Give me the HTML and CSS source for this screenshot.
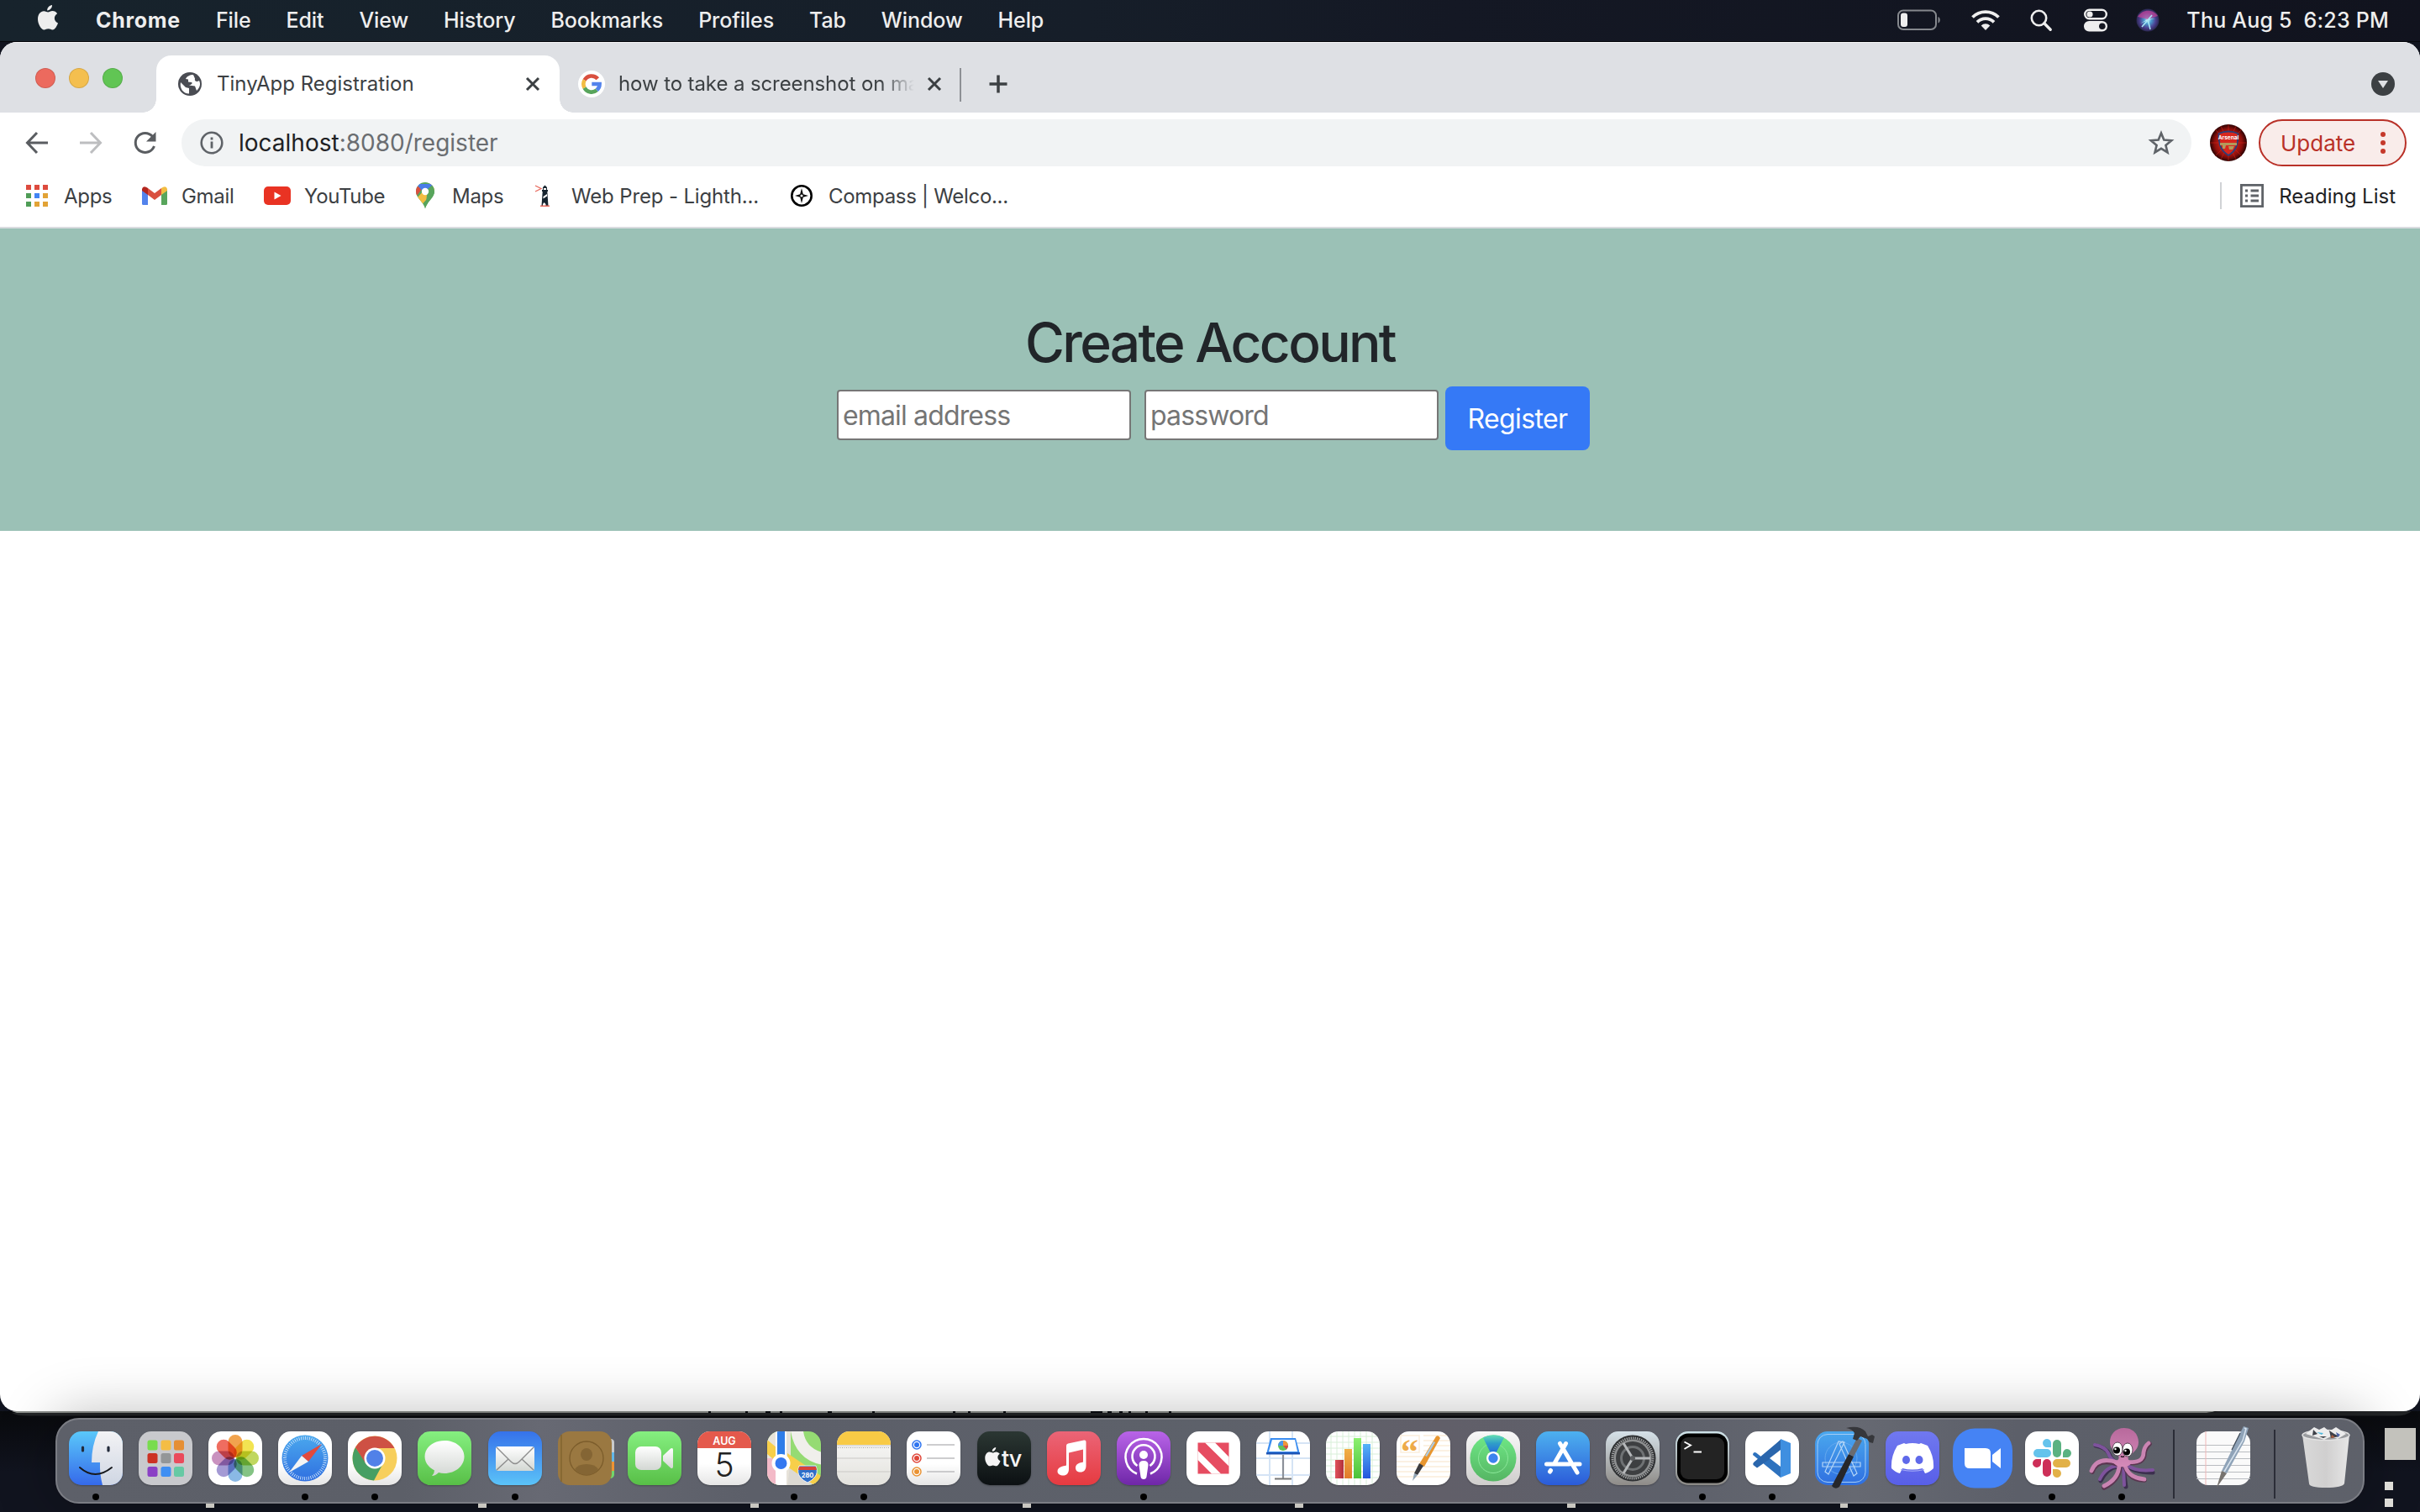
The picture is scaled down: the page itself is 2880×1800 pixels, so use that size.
FILE: index.html
```html
<!DOCTYPE html>
<html lang="en">
<head>
<meta charset="utf-8">
<title>TinyApp Registration</title>
<link rel="stylesheet" href="styles.css">
</head>
<body>
<svg class="defs" width="0" height="0" aria-hidden="true">
  <defs>
    <linearGradient id="gWhite" x1="0" y1="0" x2="0" y2="1"><stop offset="0" stop-color="#fff"/><stop offset="1" stop-color="#d3d7d3"/></linearGradient>
    <linearGradient id="gFace" x1="0" y1="0" x2="0" y2="1"><stop offset="0" stop-color="#5ac8fa"/><stop offset="1" stop-color="#3569ea"/></linearGradient>
    <linearGradient id="gFaceR" x1="0" y1="0" x2="0" y2="1"><stop offset="0" stop-color="#f3f3f5"/><stop offset="1" stop-color="#cfd6e3"/></linearGradient>
    <linearGradient id="gSafari" x1="0" y1="0" x2="0" y2="1"><stop offset="0" stop-color="#4aa8ee"/><stop offset="1" stop-color="#2f6fe0"/></linearGradient>
    <linearGradient id="gFind" x1="0" y1="0" x2="0" y2="1"><stop offset="0" stop-color="#6fe886"/><stop offset="1" stop-color="#55b563"/></linearGradient>
    <linearGradient id="gBeam" x1="0" y1="0" x2="0" y2="1"><stop offset="0" stop-color="#62dcb4"/><stop offset=".35" stop-color="#2f9fc8"/><stop offset="1" stop-color="#1f52e8"/></linearGradient>
    <linearGradient id="gBin" x1="0" y1="0" x2="1" y2="0"><stop offset="0" stop-color="#d9d9d9"/><stop offset=".5" stop-color="#d0cfcf"/><stop offset="1" stop-color="#e6e6e6"/></linearGradient>
    <linearGradient id="gOct" x1="0" y1="0" x2="0" y2="1"><stop offset="0" stop-color="#b8699c"/><stop offset="1" stop-color="#d58bb9"/></linearGradient>
    <radialGradient id="gSiri"><stop offset="0" stop-color="#d8f4ff"/><stop offset=".3" stop-color="#4b9fd0"/><stop offset=".7" stop-color="#4b3f8f"/><stop offset="1" stop-color="#2a2850"/></radialGradient>
    <radialGradient id="gFan"><stop offset=".3" stop-color="#d3251b"/><stop offset=".75" stop-color="#8d0f0b"/><stop offset="1" stop-color="#2a0202"/></radialGradient>
    <linearGradient id="gB1" x1="0" y1="0" x2="1" y2="0"><stop offset="0" stop-color="#e0525c"/><stop offset="1" stop-color="#b2303a"/></linearGradient>
    <linearGradient id="gB2" x1="0" y1="0" x2="0" y2="1"><stop offset="0" stop-color="#f0b045"/><stop offset="1" stop-color="#e27a2a"/></linearGradient>
    <linearGradient id="gB3" x1="0" y1="0" x2="0" y2="1"><stop offset="0" stop-color="#8df070"/><stop offset="1" stop-color="#4cc23b"/></linearGradient>
    <linearGradient id="gB4" x1="0" y1="0" x2="0" y2="1"><stop offset="0" stop-color="#55b4f8"/><stop offset="1" stop-color="#2456dc"/></linearGradient>
  </defs>
</svg>

<header class="menubar">
  <nav class="menus">
    <svg class="apple" viewBox="0 0 26 32"><path d="M18 0c.3 3.200-2.600 6.600-5.800 6.400C11.900 3.300 14.900.3 18 0zM13.200 8.600c1.200 0 3-1.500 5.300-1.500 2.200 0 4.400 1.200 5.600 3.100-4.800 2.900-4 9.200.9 11.200-1 3-3.600 8-6.500 8-1.900 0-2.600-1.200-5-1.200s-3.200 1.200-5 1.200C5 29.400 1 22.600 1 16.700 1 10.800 4.500 7.300 8.100 7.300c2.300 0 3.900 1.300 5.100 1.300z" fill="#eee"/></svg>
    <b>Chrome</b><span>File</span><span>Edit</span><span>View</span><span>History</span><span>Bookmarks</span><span>Profiles</span><span>Tab</span><span>Window</span><span>Help</span>
  </nav>
  <div class="status">
    <svg width="52" height="26" viewBox="0 0 52 26"><rect x="1" y="1.500" width="45" height="22.500" rx="6" fill="none" stroke="#85888d" stroke-width="2"/><rect x="4" y="4.500" width="8" height="16.500" rx="3" fill="#eee"/><path d="M48.500 9c3 1 3 6.500 0 7.500z" fill="#85888d"/></svg>
    <svg width="34" height="26" viewBox="0 0 34 26"><g fill="none" stroke="#eee" stroke-width="3.800"><path d="M1.500 9.500a22 22 0 0 1 31 0"/><path d="M7 15.300a14.200 14.200 0 0 1 20 0"/></g><path d="M17 25l-5.300-5.600a7.600 7.600 0 0 1 10.600 0z" fill="#eee"/></svg>
    <svg width="26" height="26" viewBox="0 0 26 26"><circle cx="10.500" cy="10.500" r="8.700" fill="none" stroke="#eee" stroke-width="2.600"/><path d="M16.800 16.800l7.400 7.400" stroke="#eee" stroke-width="3.400" stroke-linecap="round"/></svg>
    <svg class="control" width="28" height="28" viewBox="0 0 28 28"><rect x="1.200" y="1.700" width="25.600" height="10.600" rx="5.300" fill="none" stroke="#eee" stroke-width="2.400"/><circle cx="7" cy="7" r="3.600" fill="#eee"/><rect y="15" width="28" height="12.500" rx="6.200" fill="#eee"/><circle cx="21.800" cy="21.200" r="3.800" fill="#151722"/></svg>
    <svg width="28" height="28" viewBox="0 0 28 28"><circle cx="14" cy="14" r="13.500" fill="url(#gSiri)"/><path d="M2 10C7 1 20 0 26 9l-12 4z" fill="#d0449a" opacity=".65"/><path d="M5 18l9-5 9-1-9 2z" fill="#dff8ff"/><path d="M14 13l3 12M14 14l-7 8M14 14l5-6" stroke="#a9e8f5" stroke-width="1.500"/></svg>
    <span class="clock">Thu Aug 5&nbsp; 6:23 PM</span>
  </div>
</header>

<main class="window">
  <div class="tabs">
    <div class="lights"><i class="r"></i><i class="y"></i><i class="g"></i></div>
    <div class="tab active">
      <svg width="28" height="28" viewBox="0 0 28 28"><circle cx="14" cy="14" r="14" fill="#4a4c53"/><path d="M3 12l6 6 4 1v6.500C6 25.500 1.500 19 3 12zM18 3c-4 0-8 2-9 5l3 .500v3l4 .500c2 1-1 3-3 3.500l7 1 2 5.500c4-4 5-8 3-12-3 2-6 .500-5-2.500z" fill="#fff"/></svg>
      <span class="title">TinyApp Registration</span>
      <svg class="x" viewBox="0 0 16 16"><path d="M1 1l14 14M15 1L1 15"/></svg>
    </div>
    <div class="tab second">
      <svg width="32" height="32" viewBox="0 0 32 32"><circle cx="16" cy="16" r="16" fill="#fff"/><g fill="none" stroke-width="4.600"><path d="M23.300 9.800A9.600 9.600 0 0 0 7.600 11.400" stroke="#d9503f"/><path d="M7.600 11.400a9.600 9.600 0 0 0 0 9.200" stroke="#f2bd42"/><path d="M7.600 20.600a9.600 9.600 0 0 0 14.700 2.700" stroke="#58a55c"/><path d="M22.300 23.300c2.300-2 3.300-4.300 3.300-7.300H16.300" stroke="#5383ec"/></g></svg>
      <span class="title fade">how to take a screenshot on ma</span>
      <svg class="x" viewBox="0 0 16 16"><path d="M1 1l14 14M15 1L1 15"/></svg>
    </div>
    <i class="tabsep"></i>
    <svg class="plus" viewBox="0 0 24 24"><path d="M12 1.500v21M1.500 12h21"/></svg>
    <svg class="search-tabs" viewBox="0 0 28 28"><circle cx="14" cy="14" r="14" fill="#3c4043"/><path d="M8 10h12l-6 9z" fill="#dee0e4"/></svg>
  </div>

  <div class="toolbar">
    <svg class="nav" viewBox="0 0 28 28"><path d="M27 14H3M14 2L2.500 14 14 26"/></svg>
    <svg class="nav off" viewBox="0 0 28 28"><path d="M1 14h24M14 2l11.500 12L14 26"/></svg>
    <svg class="nav" viewBox="0 0 28 28"><path d="M23.500 6.500A11.500 11.500 0 1 0 25.500 18" /><path d="M27.500 1v11.500H16z" fill="#5a5d61" stroke="none"/></svg>
    <div class="omnibox">
      <svg width="28" height="28" viewBox="0 0 28 28"><circle cx="14" cy="14" r="12.300" fill="none" stroke="#5f6368" stroke-width="2.600"/><path d="M14 12.500v8M14 7.500v3" stroke="#5f6368" stroke-width="2.800"/></svg>
      <span class="url"><em>localhost</em>:8080/register</span>
      <svg class="star" width="32" height="30" viewBox="0 0 32 30"><path d="M16 3.500l3.300 8 8.900.700-6.800 5.700 2.100 8.500-7.500-4.600-7.500 4.600 2.100-8.500-6.800-5.700 8.900-.700z" fill="none" stroke="#5f6368" stroke-width="2.600"/></svg>
    </div>
    <svg class="avatar" viewBox="0 0 44 44"><circle cx="22" cy="22" r="22" fill="url(#gFan)"/><path d="M22 0v44M0 22h44M6 6l32 32M38 6L6 38M13 2l18 40M31 2L13 42" stroke="#e0261b" stroke-width="1" opacity=".5"/><path d="M10.500 11q11.500-5 23 0c0 13-2 20-11.500 26-9.500-6-11.500-13-11.500-26z" fill="#d8281e" stroke="#2c3f78" stroke-width="1.800"/><text x="22" y="18" text-anchor="middle" class="crest">Arsenal</text><path d="M12 22h20v3H19l-1 4h-3v-4h-3zM22 26h7l-2 4h-4z" fill="#b39a5a"/></svg>
    <div class="update"><span>Update</span><svg width="8" height="28" viewBox="0 0 8 28"><g fill="#c5392b"><circle cx="4" cy="4" r="3"/><circle cx="4" cy="14" r="3"/><circle cx="4" cy="24" r="3"/></g></svg></div>
  </div>

  <div class="bookmarks">
    <a class="bm apps"><svg width="26" height="26" viewBox="0 0 26 26"><path d="M0 0h6v6H0zM10 0h6v6h-6zM20 0h6v6h-6z" fill="#dd4b3e"/><path d="M0 10h6v6H0zM0 20h6v6H0z" fill="#4f9d57"/><path d="M10 10h6v6h-6z" fill="#4285f4"/><path d="M20 10h6v6h-6zM10 20h6v6h-6zM20 20h6v6h-6z" fill="#e2a336"/></svg>Apps</a>
    <a class="bm gmail"><svg width="30" height="22" viewBox="0 0 30 22"><path d="M0 3v17.500Q0 22 1.500 22H7V9z" fill="#5383ec"/><path d="M30 3v17.500q0 1.500-1.500 1.500H23V9z" fill="#58a55c"/><path d="M0 3Q1-1 5 .8L7 2v8L0 5z" fill="#b3261e"/><path d="M30 3q-1-4-5-2.200L23 2v8l7-5z" fill="#f2bd42"/><path d="M7 2l8 6 8-6v8l-8 6-8-6z" fill="#d9503f"/></svg>Gmail</a>
    <a class="bm yt"><svg width="32" height="22" viewBox="0 0 32 22"><rect width="32" height="22" rx="5" fill="#e93323"/><path d="M12.500 6.500v9l8-4.500z" fill="#fff"/></svg>YouTube</a>
    <a class="bm maps"><svg width="22" height="32" viewBox="0 0 22 32"><clipPath id="pin"><path d="M11 0a11 11 0 0 1 11 11c0 8-8.500 11-11 20.500C8.500 22 0 19 0 11A11 11 0 0 1 11 0z"/></clipPath><g clip-path="url(#pin)"><path d="M0 0h22v32H0z" fill="#58a55c"/><path d="M0 20L22-4v14L4 30z" fill="#f2bd42"/><path d="M-2 2l9 6-9 12z" fill="#d9503f"/><path d="M2 2h20L11 14 2 4z" fill="#4a7de8"/><path d="M14 8L22 1v12L11 31z" fill="#58a55c"/></g><circle cx="11" cy="11" r="4.200" fill="#fff"/></svg>Maps</a>
    <a class="bm light"><svg width="17" height="26" viewBox="0 0 17 26"><path d="M0 1l7 3.500L0 8" fill="none" stroke="#e8695c" stroke-width="1.300"/><path d="M9 3l2.500-2.500L14 3v3h1v2h-.7l1.200 17H7.500L8.700 8H8V6h1z" fill="#16242f"/><path d="M10 4h3v2h-3zM9.500 14l4.500-3v2.500l-4.500 3zM9 23l1.500-2 2 2v2H9z" fill="#fff"/><path d="M6 25.300h11" stroke="#e8695c" stroke-width="1.400"/></svg>Web Prep - Lighth...</a>
    <a class="bm comp"><svg width="26" height="26" viewBox="0 0 26 26"><circle cx="13" cy="13" r="11.700" fill="#fff" stroke="#000" stroke-width="2.600"/><path d="M13 4l1.800 7.200L21 13l-6.200 1.800L13 22l-1.800-7.200L5 13l6.200-1.800z"/><circle cx="13" cy="13" r="1.600" fill="#fff"/></svg>Compass | Welco...</a>
    <a class="bm reading"><i></i><svg width="28" height="28" viewBox="0 0 28 28"><rect x="1.400" y="1.400" width="25.200" height="25.200" fill="none" stroke="#5f6368" stroke-width="2.800"/><path d="M6 8h3M6 14h3M6 20h3M12.500 8H22M12.500 14H22M12.500 20H22" stroke="#5f6368" stroke-width="3"/></svg>Reading List</a>
  </div>

  <section class="page">
    <h1>Create Account</h1>
    <form class="register">
      <input type="email" placeholder="email address">
      <input type="password" placeholder="password">
      <button type="button">Register</button>
    </form>
  </section>
</main>

<footer class="desktop">
  <svg class="edge" width="2880" height="8" viewBox="0 0 2880 8"><path d="M14 0h2622q-4 2-10 2H20z" fill="#8d908d"/><path d="M14 2h2612l14-2h230q-6 5.500-20 5.500H34Q20 5.500 14 2z" fill="#222426"/><path d="M843 0h3v2h-3zM887 0h3v2h-3zM911 0h6v2h-6zM928 0h3v2h-3zM985 0h5v2h-5zM1038 0h3v2h-3zM1134 0h3v2h-3zM1152 0h3v2h-3zM1194 0h3v2h-3zM1298 0h14v2h-14zM1318 0h5v2h-5zM1332 0h4v2h-4zM1343 0h3v2h-3zM1363 0h3v2h-3zM1391 0h3v2h-3z" fill="#0a0c10"/></svg>
  <ul class="dock">
    <li class="on"><svg class="tile" viewBox="0 0 64 64"><path fill="url(#gFace)" d="M0 0h64v64H0z"/><path d="M35 0Q27 17 27 37h10q-.500 14 3 27h24V0z" fill="url(#gFaceR)"/><path d="M16.500 19v4M47 19v4" stroke="#222b3a" stroke-width="3.200" stroke-linecap="round"/><path d="M13 43q18 16 38 0" fill="none" stroke="#17191d" stroke-width="2" stroke-linecap="round"/></svg></li>
    <li><svg class="tile launchpad" viewBox="0 0 64 64"><g><rect x="10.500" y="10.500" width="12" height="12" rx="2.500" fill="#78dc4f"/><rect x="26.500" y="10.500" width="12" height="12" rx="2.500" fill="#f4bd45"/><rect x="42" y="10.500" width="12" height="12" rx="2.500" fill="#e58f35"/><rect x="10.500" y="26" width="12" height="12" rx="2.500" fill="#cc3124"/><rect x="26.500" y="26" width="12" height="12" rx="2.500" fill="#939698"/><rect x="42" y="26" width="12" height="12" rx="2.500" fill="#ea4a5c"/><rect x="10.500" y="42" width="12" height="12" rx="2.500" fill="#8a40c5"/><rect x="26.500" y="42" width="12" height="12" rx="2.500" fill="#3f8ff3"/><rect x="42" y="42" width="12" height="12" rx="2.500" fill="#66c9a4"/></g></svg></li>
    <li><svg class="tile white photos" viewBox="0 0 64 64"><g transform="translate(32 32)"><rect x="-8.500" y="-28" width="17" height="27" rx="8.500" fill="#f0993a"/><rect x="-8.500" y="-28" width="17" height="27" rx="8.500" fill="#f1e13f" transform="rotate(45)"/><rect x="-8.500" y="-28" width="17" height="27" rx="8.500" fill="#b9d34f" transform="rotate(90)"/><rect x="-8.500" y="-28" width="17" height="27" rx="8.500" fill="#76bd76" transform="rotate(135)"/><rect x="-8.500" y="-28" width="17" height="27" rx="8.500" fill="#7db1e3" transform="rotate(180)"/><rect x="-8.500" y="-28" width="17" height="27" rx="8.500" fill="#9a8fd0" transform="rotate(225)"/><rect x="-8.500" y="-28" width="17" height="27" rx="8.500" fill="#c386b8" transform="rotate(270)"/><rect x="-8.500" y="-28" width="17" height="27" rx="8.500" fill="#ee5d4e" transform="rotate(315)"/></g></svg></li>
    <li class="on"><svg class="tile white" viewBox="0 0 64 64"><circle cx="32" cy="32" r="27.500" fill="url(#gSafari)"/><circle cx="32" cy="32" r="24" fill="none" stroke="#d6e9fb" stroke-width="4" stroke-dasharray=".8 1.700"/><path d="M52 15L36 36l-8-7z" fill="#e2493c"/><path d="M13 49l15-20 8 7z" fill="#f4f4f4"/></svg></li>
    <li class="on"><svg class="tile white" viewBox="0 0 64 64"><circle cx="32" cy="32" r="26.500" fill="#f7cf5c"/><path d="M32 32L9 19A26.500 26.500 0 0 1 55.500 20H32z" fill="#ce5144"/><path d="M9 19a26.500 26.500 0 0 0 22 39.500L42 38 22 38z" fill="#479f63"/><path d="M9 19l12 19 11-18z" fill="#ce5144"/><circle cx="32" cy="32" r="12.500" fill="#fff"/><circle cx="32" cy="32" r="10" fill="#5181e8"/></svg></li>
    <li><svg class="tile green" viewBox="0 0 64 64"><path d="M32 11c13 0 23.500 8 23.500 19S45 50 32 50q-4 0-7-1-4 4-8 4 3-3 3-6.500C13 43 8.500 37 8.500 30 8.500 19 19 11 32 11z" fill="url(#gWhite)"/></svg></li>
    <li class="on"><svg class="tile mail" viewBox="0 0 64 64"><rect x="9" y="18" width="46" height="29" rx="3" fill="url(#gWhite)"/><path d="M10 19l17 17q5 5 10 0l17-17M10 46l14-13M54 46L40 33" fill="none" stroke="#8d8d8d" stroke-width="1.400"/></svg></li>
    <li><svg class="bare" viewBox="0 0 64 64"><path d="M60 9h4q3 1 3 4v12h-7z" fill="#c9cacc"/><path d="M60 25h7v11h-7z" fill="#62b7e8"/><path d="M60 36h7v11h-7z" fill="#ee9335"/><path d="M60 47h7v5q-1 4-5 4z" fill="#72d66b"/><rect x="0" y="0" width="64" height="64" rx="14" fill="#9a7841"/><path d="M4 4v56" stroke="#82642f" stroke-width="1.500"/><circle cx="34" cy="32" r="20" fill="none" stroke="#7b5c2b" stroke-width="1.300"/><ellipse cx="34" cy="27.500" rx="7" ry="7.500" fill="#846534"/><path d="M20 45q4-6 14-6t14 6q-5 7-14 7t-14-7z" fill="#846534"/></svg></li>
    <li><svg class="tile green" viewBox="0 0 64 64"><rect x="9" y="18" width="31" height="28" rx="7" fill="url(#gWhite)"/><path d="M42 29l9-8.500q3-1.500 3 1.500v20q0 3-3 1.500L42 35z" fill="url(#gWhite)"/></svg></li>
    <li><svg class="tile white" viewBox="0 0 64 64"><path d="M0 0h64v20H0z" fill="#e4594c"/><text x="32" y="15.500" text-anchor="middle" class="aug">AUG</text><text x="32" y="53.500" text-anchor="middle" class="day">5</text></svg></li>
    <li class="on"><svg class="tile" viewBox="0 0 64 64"><path d="M0 0h64v64H0z" fill="#95db73"/><path d="M0 0h28v64H0z" fill="#e7e3da"/><path d="M28 32l36 34H24z" fill="#dcd9d3"/><path d="M28 0Q34 34 66 40V25Q46 20 43 0z" fill="#f0efeb"/><path d="M0 32h10v32H0z" fill="#f3bac8"/><path d="M0 10l12 10v17L0 27zM24 26l40 27v11h-8L24 42z" fill="#f7cf4a"/><path d="M10 0h13v64H10z" fill="#fff"/><path d="M12 0h9v34h-9z" fill="#2f7de8"/><circle cx="16.500" cy="38" r="11" fill="#fff"/><circle cx="16.500" cy="38" r="7" fill="#3478f0"/><path d="M38 41h20q3 8-1 13-4 5-9 7-5-2-9-7-4-5-1-13z" fill="#2f6fc9" stroke="#fff" stroke-width=".8"/><path d="M38 42h20l1 4H37z" fill="#d8433a"/><text x="48" y="54.500" text-anchor="middle" class="route">280</text></svg></li>
    <li class="on"><svg class="tile notes" viewBox="0 0 64 64"><path d="M0 0h64v16H0z" fill="#f8ca45"/><path d="M0 17h64M0 32h64M0 48h64" stroke="#c9c8c5" stroke-width="1"/><path d="M1 19.500h62" stroke="#a5a39e" stroke-dasharray="1 1.500"/></svg></li>
    <li><svg class="tile white" viewBox="0 0 64 64"><g fill="#fff" stroke-width="1.500"><circle cx="12" cy="16" r="5" stroke="#2f75f0"/><circle cx="12" cy="32" r="5" stroke="#e0473a"/><circle cx="12" cy="48" r="5" stroke="#ea9333"/></g><circle cx="12" cy="16" r="3" fill="#2f75f0"/><circle cx="12" cy="32" r="3" fill="#e0473a"/><circle cx="12" cy="48" r="3" fill="#ea9333"/><path d="M24 16h33M24 32h33M24 48h33" stroke="#bdbdc0" stroke-width="1.300"/></svg></li>
    <li><svg class="tile tv" viewBox="0 0 64 64"><path transform="translate(8.500 19) scale(.76)" d="M18 0c.3 3.200-2.600 6.600-5.800 6.400C11.900 3.300 14.900.3 18 0zM13.200 8.600c1.200 0 3-1.500 5.300-1.500 2.200 0 4.400 1.200 5.600 3.100-4.800 2.900-4 9.200.9 11.200-1 3-3.600 8-6.500 8-1.900 0-2.600-1.200-5-1.200s-3.200 1.200-5 1.200C5 29.400 1 22.600 1 16.700 1 10.800 4.500 7.300 8.100 7.300c2.300 0 3.900 1.300 5.100 1.300z" fill="#f5f5f5"/><text x="29" y="42" class="tvt">tv</text></svg></li>
    <li><svg class="tile music" viewBox="0 0 64 64"><path d="M23 17q0-2 2-2.500l19-4q2.500-.500 2.500 2V41c0 5-3 7.500-6.500 7.500-4 0-6-2-6-5 0-5 5-6 9-7V21.500L26 25.500V45c0 5-3 7.500-6.500 7.500-4 0-7-1.500-7-5 0-5 6.500-6 10.500-7z" fill="#fff"/></svg></li>
    <li class="on"><svg class="tile podcast" viewBox="0 0 64 64"><g fill="none" stroke="#fff" stroke-width="2.600"><path d="M24 50.500a21.500 21.500 0 1 1 16 0"/><path d="M24.500 41a13.500 13.500 0 1 1 15 0"/></g><circle cx="32" cy="28" r="5" fill="#fff"/><path d="M26.500 40q0-5 5.500-5t5.500 5l-2 14q-.500 3-3.500 3t-3.500-3z" fill="#fff"/></svg></li>
    <li><svg class="tile flat" viewBox="0 0 64 64"><path d="M13.500 13.500h37v37h-37z" fill="#e64c61"/><path d="M22 13.500h12l16.500 17v11zM13.500 23v11L30 50.500h11z" fill="#fff"/></svg></li>
    <li><svg class="tile flat" viewBox="0 0 64 64"><path d="M16 0v64M43 0v64M0 14h64M0 32h64M0 52h64" stroke="#d5e4f5" stroke-width="2"/><path d="M17 8h30l5 19H12z" fill="#3b8df0"/><path d="M19 10h27l3 14H15z" fill="#fff"/><path d="M12 25h40v2.500H12z" fill="#1c54b5"/><circle cx="32" cy="17" r="6" fill="#62c25b"/><path d="M32 17v-6a6 6 0 0 1 6 6z" fill="#f0953a"/><path d="M32 17v-6a6 6 0 0 0-6 6z" fill="#4a94f0"/><path d="M32 17h6a6 6 0 0 1-2 4.500z" fill="#d94a48"/><path d="M32 28v29" stroke="#8c9199" stroke-width="2.200"/><path d="M22 56.500h20" stroke="#777" stroke-width="1.800"/></svg></li>
    <li><svg class="tile flat" viewBox="0 0 64 64"><path d="M6 0v64M13 0v64M20 0v64M27 0v64M34 0v64M41 0v64M48 0v64M55 0v64M0 6h64M0 13h64M0 20h64M0 27h64M0 34h64M0 41h64M0 48h64M0 55h64" stroke="#d8efd8"/><path d="M11 34h10v22H11z" fill="url(#gB1)"/><path d="M22 21h9v35h-9z" fill="url(#gB2)"/><path d="M33 8h9v48h-9z" fill="url(#gB3)"/><path d="M44 15h9v41h-9z" fill="url(#gB4)"/></svg></li>
    <li><svg class="tile flat" viewBox="0 0 64 64"><path d="M32 5h32M32 11h32M32 17h32M32 23h32M0 30h64M0 36h64M0 42h64M0 48h64M0 54h64" stroke="#f8e3c7" stroke-width="1.200"/><path d="M5 5h22v20H5z" fill="none" stroke="#fbeedb" stroke-width="1.500"/><text x="5" y="38" class="quote">“</text><path d="M47 6q3-2 5 2L33 42l-6-3z" fill="#e8962f"/><path d="M44 12l2 1-10 17-2-1z" fill="#a9cbe6"/><path d="M27 38l5 3-7 11-4-2z" fill="#3b3c40"/><path d="M21 50l4 2-6 7z" fill="#8fa3b3"/></svg></li>
    <li><svg class="tile findmy" viewBox="0 0 64 64"><circle cx="32" cy="32" r="27.500" fill="url(#gFind)"/><circle cx="32" cy="32" r="17.500" fill="none" stroke="#8be79a" stroke-width="1"/><path d="M32 32L20 7.500a27.500 27.500 0 0 1 25 0z" fill="url(#gBeam)"/><circle cx="32" cy="32" r="8" fill="#fff"/><circle cx="32" cy="32" r="5.700" fill="#3d83ee"/></svg></li>
    <li><svg class="tile store" viewBox="0 0 64 64"><g stroke="#fff" stroke-width="5" stroke-linecap="round"><path d="M28.500 14.500L49 49M35.500 14.500L22 38M12.500 39h27M46 39h6M16.500 48l1-1.500"/></g></svg></li>
    <li><svg class="tile prefs" viewBox="0 0 64 64"><circle cx="32" cy="32" r="27.500" fill="#2f3133"/><circle cx="32" cy="32" r="22.500" fill="#8e9091"/><circle cx="32" cy="32" r="24" fill="none" stroke="#a3a5a6" stroke-width="3" stroke-dasharray="1.300 1.200"/><circle cx="32" cy="32" r="20" fill="#3d3f41"/><circle cx="32" cy="32" r="13.500" fill="none" stroke="#6f7274" stroke-width="3"/><path d="M32 32h21M32 32L21 14M32 32L21 50" stroke="#b5b8ba" stroke-width="3"/><circle cx="32" cy="32" r="3" fill="#5c5e60"/></svg></li>
    <li class="on"><svg class="tile term" viewBox="0 0 64 64"><rect x="2" y="2.500" width="60" height="59" rx="13" fill="#000"/><rect x="6" y="7" width="52" height="50" rx="9" fill="#232323"/><path d="M10.500 12.500l7.500 4-7.500 4.500M21.500 24.500h9.500" stroke="#fff" stroke-width="1.900" fill="none"/></svg></li>
    <li class="on"><svg class="tile flat" viewBox="0 0 64 64"><path d="M42 10L20 31 13 25.500q-2-1-3.500.500L9 28l33 27z" fill="#2e72be"/><path d="M42 10v14L14 43.500 9.500 40q-1-2 1-3.500z" fill="#2a66ad"/><path d="M42 9l12 5v36l-12 5z" fill="#3f8fe0"/><path d="M42 22v20L29 32z" fill="#fff"/></svg></li>
    <li><svg class="bare" viewBox="0 0 64 64"><rect width="64" height="64" rx="15" fill="url(#gSafari)"/><rect x="3" y="3.500" width="57" height="57" rx="12" fill="none" stroke="#a4cdf5" stroke-width="1"/><circle cx="31" cy="32" r="19" fill="none" stroke="#66a9ee"/><g fill="none" stroke="#b3d5f7" stroke-width="1.200"><path d="M33 12l17 38-4 3-17-38zM28 12L12 48l4 3 19-38zM9 37h45v5H9z"/></g><path d="M40 27l6 3-17 36q-5 4-9-1z" fill="#26272b"/><path d="M50 8l6 3-10 19-6-3z" fill="#696b70"/><path d="M37-4q15-4 23 4l3 6 5-2 3 2-2 8-4-1-3-4-8-3-4 5-5-2 2-7q-3-5-10-6z" fill="#36373b"/></svg></li>
    <li class="on"><svg class="tile discord" viewBox="0 0 64 64"><path d="M24 15q8-2 16 0l2-1 8 3q8 13 7 27-5 5-10 6l-3-6q-12 3-24 0l-3 6q-5-1-10-6Q6 30 14 17l8-3z" fill="#fff"/><ellipse cx="24.500" cy="34" rx="4.500" ry="5" fill="#5f69ea"/><ellipse cx="40" cy="34" rx="4.500" ry="5" fill="#5f69ea"/><path d="M18 45.500q14 3.500 28 0" stroke="#a7aef6" fill="none"/></svg></li>
    <li><svg class="bare" viewBox="0 0 64 64"><rect x="-3" y="-3.500" width="71" height="71" rx="26" fill="#4583f4"/><path d="M11 20h25q6 0 6 6v18H17q-6 0-6-6z" fill="#fff"/><path d="M44 28l10-8v24l-10-8z" fill="#fff"/></svg></li>
    <li class="on"><svg class="tile flat" viewBox="0 0 64 64"><g stroke-width="10" stroke-linecap="round" fill="none"><path d="M15 26h11" stroke="#65c3ec"/><path d="M38 15v11" stroke="#5bb281"/><path d="M38 38h11" stroke="#e2b148"/><path d="M26 38v11" stroke="#cd2f58"/></g><path d="M31 19v-4.500a5 5 0 1 0-5 4.500z" fill="#65c3ec"/><path d="M45 31h4.500a5 5 0 1 0-4.500-5z" fill="#5bb281"/><path d="M33 45v4.500a5 5 0 1 0 5-4.500z" fill="#e2b148"/><path d="M19 33h-4.500a5 5 0 1 0 4.500 5z" fill="#cd2f58"/></svg></li>
    <li class="on"><svg class="bare" viewBox="0 0 64 64"><g fill="none" stroke-linecap="round" stroke-linejoin="round"><g stroke="#3c2f4e" stroke-width="5"><path d="M29 38Q20 36 17 27 13 19 1 17M27 42Q15 43 7 59M39 41q8 8 30 8M34 44l3 22"/></g><g stroke="#7e539c" stroke-width="4"><path d="M28 37Q19 35 16 26 12 18 0 16M27 41Q13 42 6 57M39 40q8 8 30 6M34 43l1 21"/></g><g stroke="#5a3550" stroke-width="5.600"><path d="M27 39Q3 31-3 48M38 37q21 3 21-11 1-7 6-11M30 42q-1 16-19 25M36 42q5 16 23 16"/></g><g stroke="#ca84b2" stroke-width="4.800"><path d="M27 37Q3 29-4 47M38 36q20 3 20-11 1-7 6-11M29 41q-1 16-18 24M36 41q5 15 23 16"/></g></g><path d="M35-4c11 0 17 8 17 17 0 8-6 12-11 16-3 3-1 6 3 8-3 7-18 7-22 0 5-2 8-4 6-8-4-4-10-8-10-16C18 4 24-4 35-4z" fill="url(#gOct)"/><ellipse cx="27" cy="21" rx="6" ry="8" fill="#fff" stroke="#3a2535" stroke-width=".8"/><ellipse cx="39" cy="22" rx="6" ry="8" fill="#fff" stroke="#3a2535" stroke-width=".8"/><circle cx="26" cy="22.500" r="4"/><circle cx="38" cy="24.500" r="4"/><circle cx="24.500" cy="21" r="1.200" fill="#fff"/><circle cx="36.500" cy="23" r="1.200" fill="#fff"/><path d="M31 29.500q2 2 4 0" stroke="#25111f" stroke-width="1.200" fill="none"/></svg></li>
    <li class="sep"></li>
    <li class="solo"><svg class="bare" viewBox="0 0 64 64"><rect width="64" height="64" rx="14" fill="#fafafa"/><path d="M0 16.500h64M0 24.500h64M0 32.500h64M0 40.500h64M0 48.500h64M0 56.500h64" stroke="#b9bcc0" stroke-width="1.200"/><path d="M11 0v64" stroke="#f0b7b7"/><path d="M56-6l6 2-5 16-21 38-6-3L49 8z" fill="#8fa3b8"/><path d="M57-4l2 1-4 14-22 37" fill="none" stroke="#d8e3ee" stroke-width="1.500"/><path d="M52 2l-10 20" stroke="#3f4a58" stroke-width="1.300"/><path d="M30 47l6 3-12 17z" fill="#77736f"/></svg></li>
    <li class="sep two"></li>
    <li class="solo"><svg class="bare" viewBox="0 0 64 64"><path d="M4 4h56l-6 58q-2 5-22 5t-20-5z" fill="url(#gBin)"/><ellipse cx="32" cy="4.500" rx="28" ry="6" fill="#9a9c9f" stroke="#e3e3e3" stroke-width="1.500"/><path d="M8 3l10-8 6 3 6-3 6 5 8-5 12 8-10 6-8-3-8 4-9-3z" fill="#ececec"/><path d="M17-2l5 5-6 2zM36-1l6 4 6 3-10 2zM24 6l5 2 4-2z" fill="#3d4048"/><path d="M21 1l8 1-2 2z" fill="#4fb8dc"/><path d="M44 1l5 3-3 3z" fill="#4a63a8"/><path d="M39 4l4 3-5 1z" fill="#a85a3c"/></svg></li>
  </ul>
  <svg class="stacks" width="38" height="96" viewBox="0 0 38 96"><path d="M0 0h37v38H0z" fill="#c3c2bc"/><path d="M0 64h10v10H0zM0 84h10v10H0z" fill="#deddd8"/></svg>
  <svg class="bits" width="2200" height="5" viewBox="0 0 2200 5"><path d="M245 0h10v5h-10zM569 0h10v5h-10zM893 0h10v5h-10zM1217 0h10v5h-10zM1541 0h10v5h-10zM1865 0h10v5h-10zM2190 0h9v5h-9z" fill="#c9c7c1"/></svg>
</footer>
</body>
</html>
```
FILE: styles.css
```css
* { box-sizing: border-box; }
body {
  margin: 0;
  width: 2880px;
  height: 1800px;
  overflow: hidden;
  display: flex;
  flex-direction: column;
  background: #11141f;
  font-family: Inter, "Liberation Sans", sans-serif;
  color: #3c4043;
}
svg { display: block; flex: none; overflow: visible; }
.defs { position: absolute; }

/* system menu bar */
.menubar {
  height: 50px;
  flex: none;
  display: flex;
  justify-content: space-between;
  padding: 0 37px 2px 44px;
  background: linear-gradient(90deg, #17232c, #161e29 45%, #141824 60%, #11131e);
  border-bottom: 1px solid #05070b;
  color: #eee;
  font-size: 25px;
}
.menus, .status { display: flex; align-items: center; }
.menus { gap: 42px; letter-spacing: -0.1px; }
.menus b { letter-spacing: 0.7px; }
.menus .apple { width: 26px; height: 32px; margin-right: 2px; margin-top: -4px; }
.menus span { font-weight: 500; }
.status { gap: 36px; }
.control { margin: 0 -2px 0 2px; }
.clock { margin-left: -4px; font-weight: 500; letter-spacing: 0.22px; white-space: nowrap; }

/* browser window */
.window {
  height: 1630px;
  flex: none;
  background: #fff;
  border-radius: 20px;
  overflow: hidden;
}
.tabs {
  height: 84px;
  display: flex;
  align-items: flex-end;
  background: #dee0e4;
  border-top: 1px solid #f6f6f7;
}
.lights { width: 186px; height: 83px; display: flex; gap: 16px; padding: 30px 0 0 42px; }
.lights i { width: 24px; height: 24px; border-radius: 50%; border: 1px solid rgba(0,0,0,.12); }
.r { background: #ec6a5e; }
.y { background: #f4bf4f; }
.g { background: #61c554; }
.tab { height: 68px; display: flex; align-items: center; }
.tab.active {
  position: relative;
  width: 480px;
  padding: 0 24px 0 26px;
  gap: 18px;
  background: #fff;
  border-radius: 18px 18px 0 0;
}
.tab.active::before, .tab.active::after {
  content: "";
  position: absolute;
  bottom: 0;
  width: 16px;
  height: 16px;
}
.tab.active::before { left: -16px; background: radial-gradient(circle at 0 0, transparent 15.5px, #fff 16px); }
.tab.active::after { right: -16px; background: radial-gradient(circle at 100% 0, transparent 15.5px, #fff 16px); }
.tab.second { width: 456px; padding: 0 2px 0 22px; gap: 16px; }
.title { flex: 1; padding-bottom: 2px; font-size: 24px; white-space: nowrap; color: #3c4043; }
.fade { flex: none; width: 355px; letter-spacing: -0.1px; mask-image: linear-gradient(90deg, #000 312px, transparent 352px); }
.x { width: 16px; height: 16px; stroke: #3c4043; stroke-width: 3; }
.second .x { margin-left: -3px; }
.tabsep { width: 2px; height: 40px; margin: 0 0 13px 20px; background: #8d9095; }
.plus { width: 24px; height: 24px; margin: 0 0 22px 32px; stroke: #3c4043; stroke-width: 3.5; }
.search-tabs { width: 28px; height: 28px; margin: 0 30px 20px auto; }

.toolbar {
  height: 72px;
  display: flex;
  align-items: center;
  padding: 0 16px 0 30px;
}
.nav { width: 28px; height: 28px; margin-right: 36px; fill: none; stroke: #5a5d61; stroke-width: 3; }
.off { stroke: #bdbec0; }
.omnibox {
  flex: 1;
  height: 56px;
  margin: 0 22px 0 -6px;
  padding: 0 20px 0 22px;
  display: flex;
  align-items: center;
  border-radius: 28px;
  background: #f1f3f4;
  font-size: 28px;
}
.url { flex: 1; margin-left: 18px; color: #6a6d71; }
.url em { font-style: normal; color: #202124; }
.avatar { width: 44px; height: 44px; margin-right: 14px; }
.crest { font-size: 6.5px; font-weight: 700; fill: #fff; }
.update {
  width: 176px;
  height: 56px;
  display: flex;
  align-items: center;
  justify-content: space-between;
  padding: 0 22px 0 24px;
  border: 2px solid #b93128;
  border-radius: 28px;
  background: #f9ecea;
  color: #b93128;
  font-size: 26px;
}

.bookmarks {
  height: 66px;
  display: flex;
  align-items: center;
  padding: 0 29px 10px 31px;
  border-bottom: 2px solid #dadce0;
  font-size: 24px;
  letter-spacing: -0.3px;
}
.bm { display: flex; align-items: center; white-space: nowrap; }
.apps { width: 138px; gap: 19px; }
.gmail { width: 145px; gap: 17px; }
.yt { width: 181px; gap: 16px; }
.maps { width: 142px; gap: 21px; }
.light { width: 304px; gap: 26px; letter-spacing: -0.15px; }
.comp { gap: 19px; }
.reading { margin-left: auto; gap: 18px; color: #202124; letter-spacing: 0; }
.reading i { width: 2px; height: 32px; margin-right: 4px; background: #d0d2d5; }

/* page content */
.page {
  height: 360px;
  background: #9bc1b6;
  display: flex;
  flex-direction: column;
  align-items: center;
  padding-top: 97px;
}
.page h1 { margin: 0; font-size: 64px; line-height: 77px; font-weight: 550; letter-spacing: -2.65px; color: #212529; }
.register { display: flex; align-items: flex-start; padding: 14px 0 0 8px; }
.register input {
  width: 350px;
  height: 60px;
  margin: 4px 16px 0 0;
  padding: 2px 5px;
  border: 2px solid #767676;
  border-radius: 4px;
  background: #fff;
  font: 32px Inter, sans-serif;
  letter-spacing: -0.85px;
}
.register input + input { margin-right: 8px; }
.register input::placeholder { color: #757575; }
.register button {
  width: 172px;
  height: 76px;
  padding: 1px 0 0;
  border: 0;
  border-radius: 8px;
  background: #3579f6;
  color: #fff;
  font: 32px Inter, sans-serif;
  letter-spacing: -0.6px;
}

/* desktop strip and dock */
.desktop { position: relative; height: 120px; flex: none; background: linear-gradient(#090a0d, #11141f 60%); }
.dock {
  position: relative;
  width: 2748px;
  height: 102px;
  margin: 0 0 0 66px;
  padding: 14px 0 0 4px;
  display: flex;
  list-style: none;
  border: 2px solid #7b7d84;
  border-radius: 28px;
  background: linear-gradient(90deg, #5d6069, #5c5f68 15%, #676973 21%, #5c5f69 30%, #5d616a 50%, #615f69 60%, #5d606a 70%, #666972 78%, #5c5f69 85%, #5e616a);
  box-shadow: 0 0 64px 6px rgba(0,0,0,.26);
}
.dock li { width: 83.17px; height: 82px; display: flex; flex-direction: column; align-items: center; gap: 6px; }
.dock svg { width: 64px; height: 64px; }
.dock .on::after { content: ""; margin-top: 4px; width: 8px; height: 8px; border-radius: 50%; background: #000; }
.dock .sep { width: 2px; height: 82px; margin: -2px 26px 0 19px; background: #2b2d37; }
.dock .two { margin: -2px 28px 0; }
.dock .solo { width: 64px; }
.tile { border-radius: 15px; overflow: hidden; box-shadow: 0 1px 2px rgba(0,0,0,.25); }
.launchpad { background: #c8c9cd; }
.white { background: linear-gradient(#fff 60%, #e6e6e6); }
.flat { background: #fff; }
.photos rect { mix-blend-mode: multiply; opacity: .9; }
.photos { background: #fff; isolation: isolate; }
.green { background: linear-gradient(#85ef80, #58bf47); }
.mail { background: linear-gradient(#3672ea, #5bc3f8); }
.notes { background: linear-gradient(#fafafa, #e3e2dd); }
.tv { background: linear-gradient(#2b3733, #0c1013); }
.music { background: linear-gradient(#eb6577, #e63a40); }
.podcast { background: linear-gradient(#b964e8, #6f27a8); }
.findmy { background: linear-gradient(#f8f8f8, #cfcdcc); }
.store { background: linear-gradient(#4db1ef, #2b5bd9); }
.prefs { background: linear-gradient(#d5e1e8, #8f8c88); }
.term { background: linear-gradient(#cfe3ea, #8a8884); }
.discord { background: linear-gradient(#7078ef, #585fe8); }
.aug { font-size: 12.5px; font-weight: 600; fill: #fff; }
.day { font-size: 39px; font-weight: 300; fill: #222; }
.route { font-size: 7.5px; font-weight: 700; fill: #fff; }
.tvt { font-size: 27px; font-weight: 500; fill: #f5f5f5; letter-spacing: -1px; }
.quote { font: 700 42px "Liberation Serif", serif; fill: #eeab49; }
.stacks { position: absolute; left: 2838px; top: 20px; }
.bits { position: absolute; left: 0; top: 110px; }
```
